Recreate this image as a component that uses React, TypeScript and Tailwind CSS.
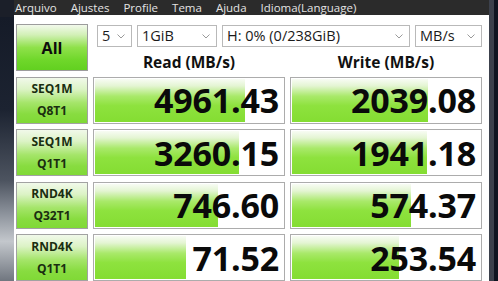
const MENU = ['Arquivo', 'Ajustes', 'Profile', 'Tema', 'Ajuda', 'Idioma(Language)'];

const ROWS = [
  { a: 'SEQ1M', b: 'Q8T1', read: '4961.43', readBar: 150, write: '2039.08', writeBar: 136 },
  { a: 'SEQ1M', b: 'Q1T1', read: '3260.15', readBar: 144, write: '1941.18', writeBar: 135 },
  { a: 'RND4K', b: 'Q32T1', read: '746.60', readBar: 123, write: '574.37', writeBar: 119 },
  { a: 'RND4K', b: 'Q1T1', read: '71.52', readBar: 91, write: '253.54', writeBar: 107 },
];

function Chevron() {
  return (
    <svg width="8" height="5" viewBox="0 0 8 5" className="shrink-0">
      <polyline points="0.5,0.5 4,4 7.5,0.5" fill="none" stroke="#9a9a9a" strokeWidth="1" />
    </svg>
  );
}

function Combo({ value, width }: { value: string; width: string }) {
  return (
    <div className={`${width} h-[22px] border border-[#b9b9b9] bg-white flex items-center justify-between pl-[4px] pr-[6px]`}>
      <span className="text-[14.5px] leading-none text-[#1a1a1a]">{value}</span>
      <Chevron />
    </div>
  );
}

function ValueBox({ value, bar }: { value: string; bar: number }) {
  return (
    <div className="relative h-[47px] border border-[#acacac] bg-white p-[1px]">
      <div
        className="absolute left-[1px] top-[1px] bottom-[1px] bg-[linear-gradient(to_bottom,#f8fcf4_0%,#e4f5d3_16%,#a9e96a_40%,#8ee23e_62%,#84dd32_100%)]"
        style={{ width: bar }}
      />
      <div className="relative h-full flex items-center justify-end pr-[4px] text-[34px] leading-none font-bold text-[#0a0a0a] tracking-[-0.2px]">
        {value}
      </div>
    </div>
  );
}

export default function App() {
  return (
    <div className="w-[498px] h-[281px] flex overflow-hidden bg-[#141926] [font-family:'Open_Sans',sans-serif]">
      <div className="w-[14px] flex flex-col">
        <div className="h-[17px] bg-[#1b1f29]" />
        <div className="flex-1 bg-[linear-gradient(to_bottom,#151b28_0%,#1c2331_35%,#4d5460_62%,#8f959e_75%,#c3c7cc_85%,#70767f_100%)]" />
      </div>
      <div className="w-[475px] flex flex-col bg-white">
        <div className="h-[17px] bg-[#2b2b2b] flex items-center gap-[14px] pl-[1px] text-[11.5px] leading-none text-[#e3e3e3]">
          {MENU.map((m) => (
            <span key={m}>{m}</span>
          ))}
        </div>
        <div className="pl-[2px] pt-[9px] grid grid-cols-[72px_192px_192px] gap-x-[5px] gap-y-[5.5px]">
          <div className="h-[47px] border border-[#9c9c9c] bg-[linear-gradient(to_bottom,#f2f9ec_0%,#d2f0b6_22%,#8fe14a_50%,#6fd72a_78%,#62d020_100%)] flex items-center justify-center text-[16px] font-bold text-[#0d0d0d]">
            All
          </div>
          <div className="col-span-2 h-[47px] flex flex-col">
            <div className="flex gap-[5px] ml-[4px] mt-[1px]">
              <Combo value="5" width="w-[35px]" />
              <Combo value="1GiB" width="w-[80px]" />
              <Combo value="H: 0% (0/238GiB)" width="w-[188px]" />
              <Combo value="MB/s" width="w-[67px]" />
            </div>
            <div className="flex-1 grid grid-cols-2 gap-x-[5px] items-end">
              <div className="text-center text-[15.5px] leading-[17px] font-bold text-[#111]">Read (MB/s)</div>
              <div className="text-center text-[15.5px] leading-[17px] font-bold text-[#111]">Write (MB/s)</div>
            </div>
          </div>
          {ROWS.map((r, i) => (
            <div key={i} className="contents">
              <div className="h-[47px] border border-[#a2a2a2] bg-[linear-gradient(to_bottom,#f1f9ea_0%,#dcf3c6_25%,#a5e56a_55%,#88dc40_80%,#80d936_100%)] flex flex-col items-center justify-center text-[12px] leading-[22px] font-bold text-[#1a2e10]">
                <span>{r.a}</span>
                <span>{r.b}</span>
              </div>
              <ValueBox value={r.read} bar={r.readBar} />
              <ValueBox value={r.write} bar={r.writeBar} />
            </div>
          ))}
        </div>
      </div>
      <div className="flex-1 flex">
        <div className="w-[5px] bg-[#3c414c]" />
        <div className="flex-1 bg-[#101521]" />
      </div>
    </div>
  );
}
